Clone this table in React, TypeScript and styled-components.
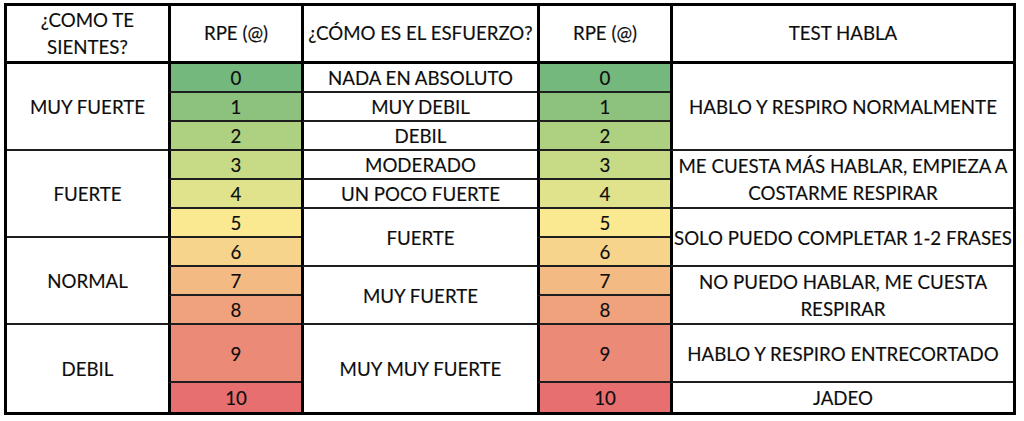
import styled, { createGlobalStyle } from 'styled-components';

const GlobalStyle = createGlobalStyle`
  * { box-sizing: border-box; }
  html, body { margin: 0; padding: 0; background: #fff; }
  body { font-family: Lato, "Liberation Sans", sans-serif; color: #0d0d0d; }
`;

const rpeColors = [
  '#74b87e',
  '#8dc27e',
  '#aed181',
  '#c7da85',
  '#e0e38b',
  '#fbe991',
  '#f6d48b',
  '#f3bb83',
  '#efa27c',
  '#eb8a77',
  '#e76f6f',
];

const feelings = [
  { label: 'MUY FUERTE', from: 0, span: 3 },
  { label: 'FUERTE', from: 3, span: 3 },
  { label: 'NORMAL', from: 6, span: 3 },
  { label: 'DEBIL', from: 9, span: 2 },
];

const efforts = [
  { label: 'NADA EN ABSOLUTO', from: 0, span: 1 },
  { label: 'MUY DEBIL', from: 1, span: 1 },
  { label: 'DEBIL', from: 2, span: 1 },
  { label: 'MODERADO', from: 3, span: 1 },
  { label: 'UN POCO FUERTE', from: 4, span: 1 },
  { label: 'FUERTE', from: 5, span: 2 },
  { label: 'MUY FUERTE', from: 7, span: 2 },
  { label: 'MUY MUY FUERTE', from: 9, span: 2 },
];

const talk = [
  { label: 'HABLO Y RESPIRO NORMALMENTE', from: 0, span: 3 },
  { label: 'ME CUESTA MÁS HABLAR, EMPIEZA A\nCOSTARME RESPIRAR', from: 3, span: 2 },
  { label: 'SOLO PUEDO COMPLETAR 1-2 FRASES', from: 5, span: 2 },
  { label: 'NO PUEDO HABLAR, ME CUESTA\nRESPIRAR', from: 7, span: 2 },
  { label: 'HABLO Y RESPIRO ENTRECORTADO', from: 9, span: 1 },
  { label: 'JADEO', from: 10, span: 1 },
];

const LAST = 10;

const Table = styled.div`
  display: grid;
  grid-template-columns: 161px 133px 236px 133px 343px;
  grid-template-rows: 58px repeat(9, 29px) 58px 29px;
  width: max-content;
  margin: 3px 0 0 4px;
  border: 3px solid #000;
  box-shadow: 0 2px 0 #c8c8c8;
  font-size: 18.7px;
  line-height: 27px;
  -webkit-text-stroke: 0.15px #0d0d0d;
`;

const Cell = styled.div<{ $col: number; $row: number; $span?: number; $bg?: string; $last?: boolean }>`
  grid-column: ${(p) => p.$col};
  grid-row: ${(p) => p.$row} / span ${(p) => p.$span ?? 1};
  display: flex;
  align-items: center;
  justify-content: center;
  text-align: center;
  white-space: pre-line;
  padding: 2px 0 0;
  background: ${(p) => p.$bg ?? '#fff'};
  border-left: ${(p) => (p.$col > 1 ? '3px solid #000' : 'none')};
  border-bottom: ${(p) => (p.$last ? 'none' : '2px solid #1e1e1e')};
`;

const HeadCell = styled(Cell)`
  border-bottom: 3px solid #000;
  padding-top: 0;
`;

const App = () => {
  const rows = rpeColors.map((_, i) => i);
  return (
    <>
      <GlobalStyle />
      <Table>
        <HeadCell $col={1} $row={1}>
          ¿COMO TE SIENTES?
        </HeadCell>
        <HeadCell $col={2} $row={1}>
          RPE (@)
        </HeadCell>
        <HeadCell $col={3} $row={1}>
          ¿CÓMO ES EL ESFUERZO?
        </HeadCell>
        <HeadCell $col={4} $row={1}>
          RPE (@)
        </HeadCell>
        <HeadCell $col={5} $row={1}>
          TEST HABLA
        </HeadCell>

        {feelings.map((f) => (
          <Cell key={`f${f.from}`} $col={1} $row={f.from + 2} $span={f.span} $last={f.from + f.span - 1 === LAST}>
            {f.label}
          </Cell>
        ))}

        {rows.map((i) => (
          <Cell key={`a${i}`} $col={2} $row={i + 2} $bg={rpeColors[i]} $last={i === LAST}>
            {i}
          </Cell>
        ))}

        {efforts.map((e) => (
          <Cell key={`e${e.from}`} $col={3} $row={e.from + 2} $span={e.span} $last={e.from + e.span - 1 === LAST}>
            {e.label}
          </Cell>
        ))}

        {rows.map((i) => (
          <Cell key={`b${i}`} $col={4} $row={i + 2} $bg={rpeColors[i]} $last={i === LAST}>
            {i}
          </Cell>
        ))}

        {talk.map((t) => (
          <Cell key={`t${t.from}`} $col={5} $row={t.from + 2} $span={t.span} $last={t.from + t.span - 1 === LAST}>
            {t.label}
          </Cell>
        ))}
      </Table>
    </>
  );
};

export default App;
